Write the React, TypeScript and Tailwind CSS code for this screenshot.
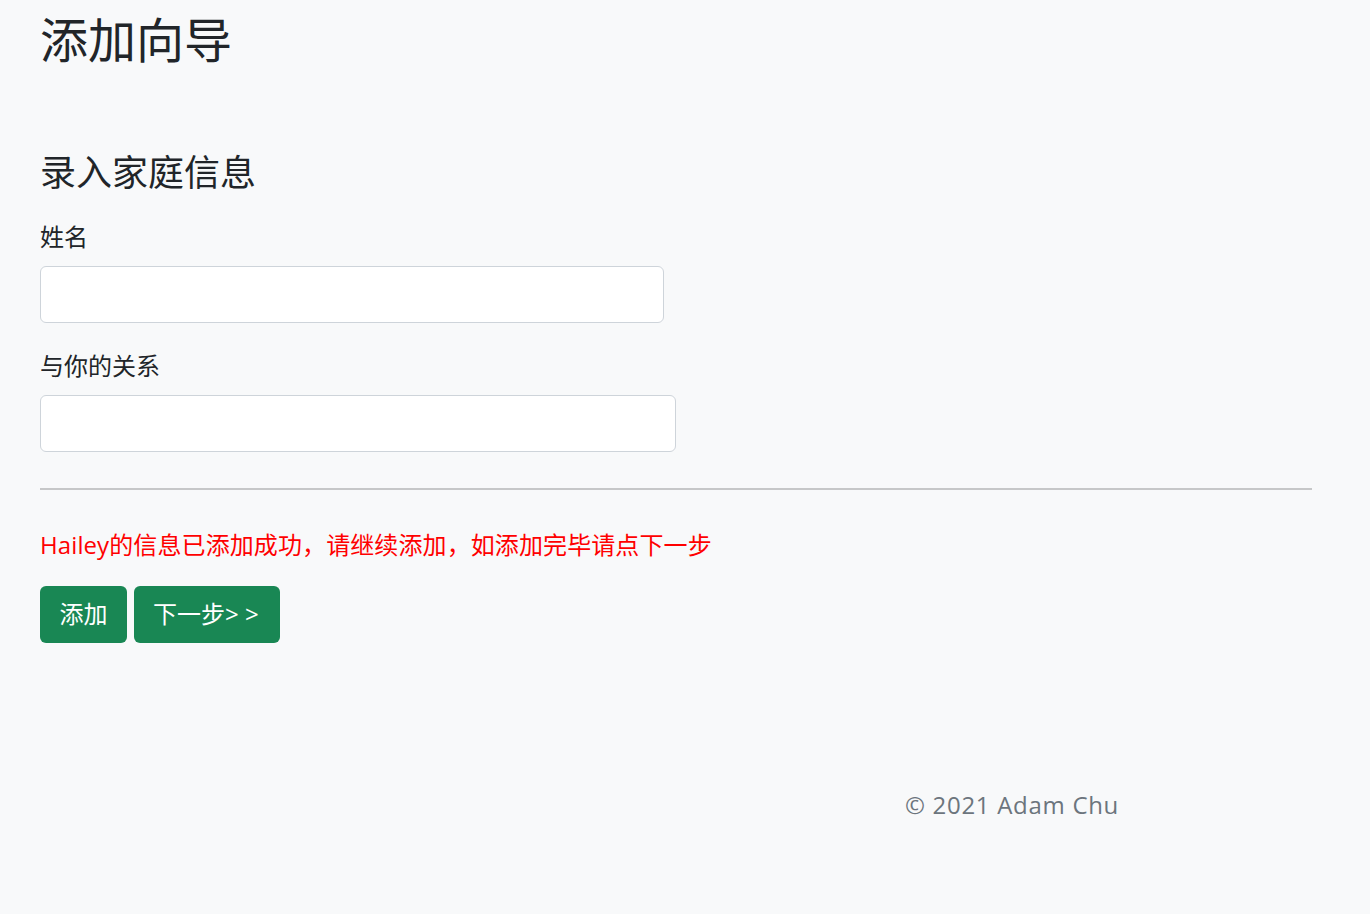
import React from 'react';

const font = { fontFamily: '"Open Sans", "Noto Sans CJK SC", sans-serif' };

export default function App() {
  return (
    <div className="min-h-[914px] bg-[#f8f9fa] text-[#212529]" style={font}>
      <div className="px-10 pt-[11px]">
        <h2 className="text-[48px] leading-[1.2] font-normal">添加向导</h2>

        <h4 className="mt-[82px] text-[36px] leading-[1.2] font-normal">录入家庭信息</h4>

        <form className="mt-[25px]">
          <div>
            <label className="block text-[24px] leading-[1.5] mb-[11px]">姓名</label>
            <input
              type="text"
              className="block w-[624px] h-[57px] bg-white border border-[#ced4da] rounded-[6px] px-4 text-[24px]"
            />
          </div>
          <div className="mt-[25px]">
            <label className="block text-[24px] leading-[1.5] mb-[11px]">与你的关系</label>
            <input
              type="text"
              className="block w-[636px] h-[57px] bg-white border border-[#ced4da] rounded-[6px] px-4 text-[24px]"
            />
          </div>
        </form>

        <hr className="mt-[36px] w-[1272px] border-0 h-[2px] bg-[#c6c7c8]" />

        <p className="mt-[37px] text-[24px] leading-[1.5] text-[#ff0000] tracking-[0.1px]">
          Hailey的信息已添加成功，请继续添加，如添加完毕请点下一步
        </p>

        <div className="mt-[23px] flex gap-[7px]">
          <button className="h-[57px] w-[87px] rounded-[6px] bg-[#198754] text-white text-[24px] leading-none">
            添加
          </button>
          <button className="h-[57px] w-[146px] rounded-[6px] bg-[#198754] text-white text-[24px] leading-none pl-[19px] text-left">
            下一步&gt; &gt;
          </button>
        </div>

        <footer className="mt-[144px] pl-[865px] text-[24px] leading-[1.5] text-[#6c757d] tracking-[0.7px]">
          © 2021 Adam Chu
        </footer>
      </div>
    </div>
  );
}
